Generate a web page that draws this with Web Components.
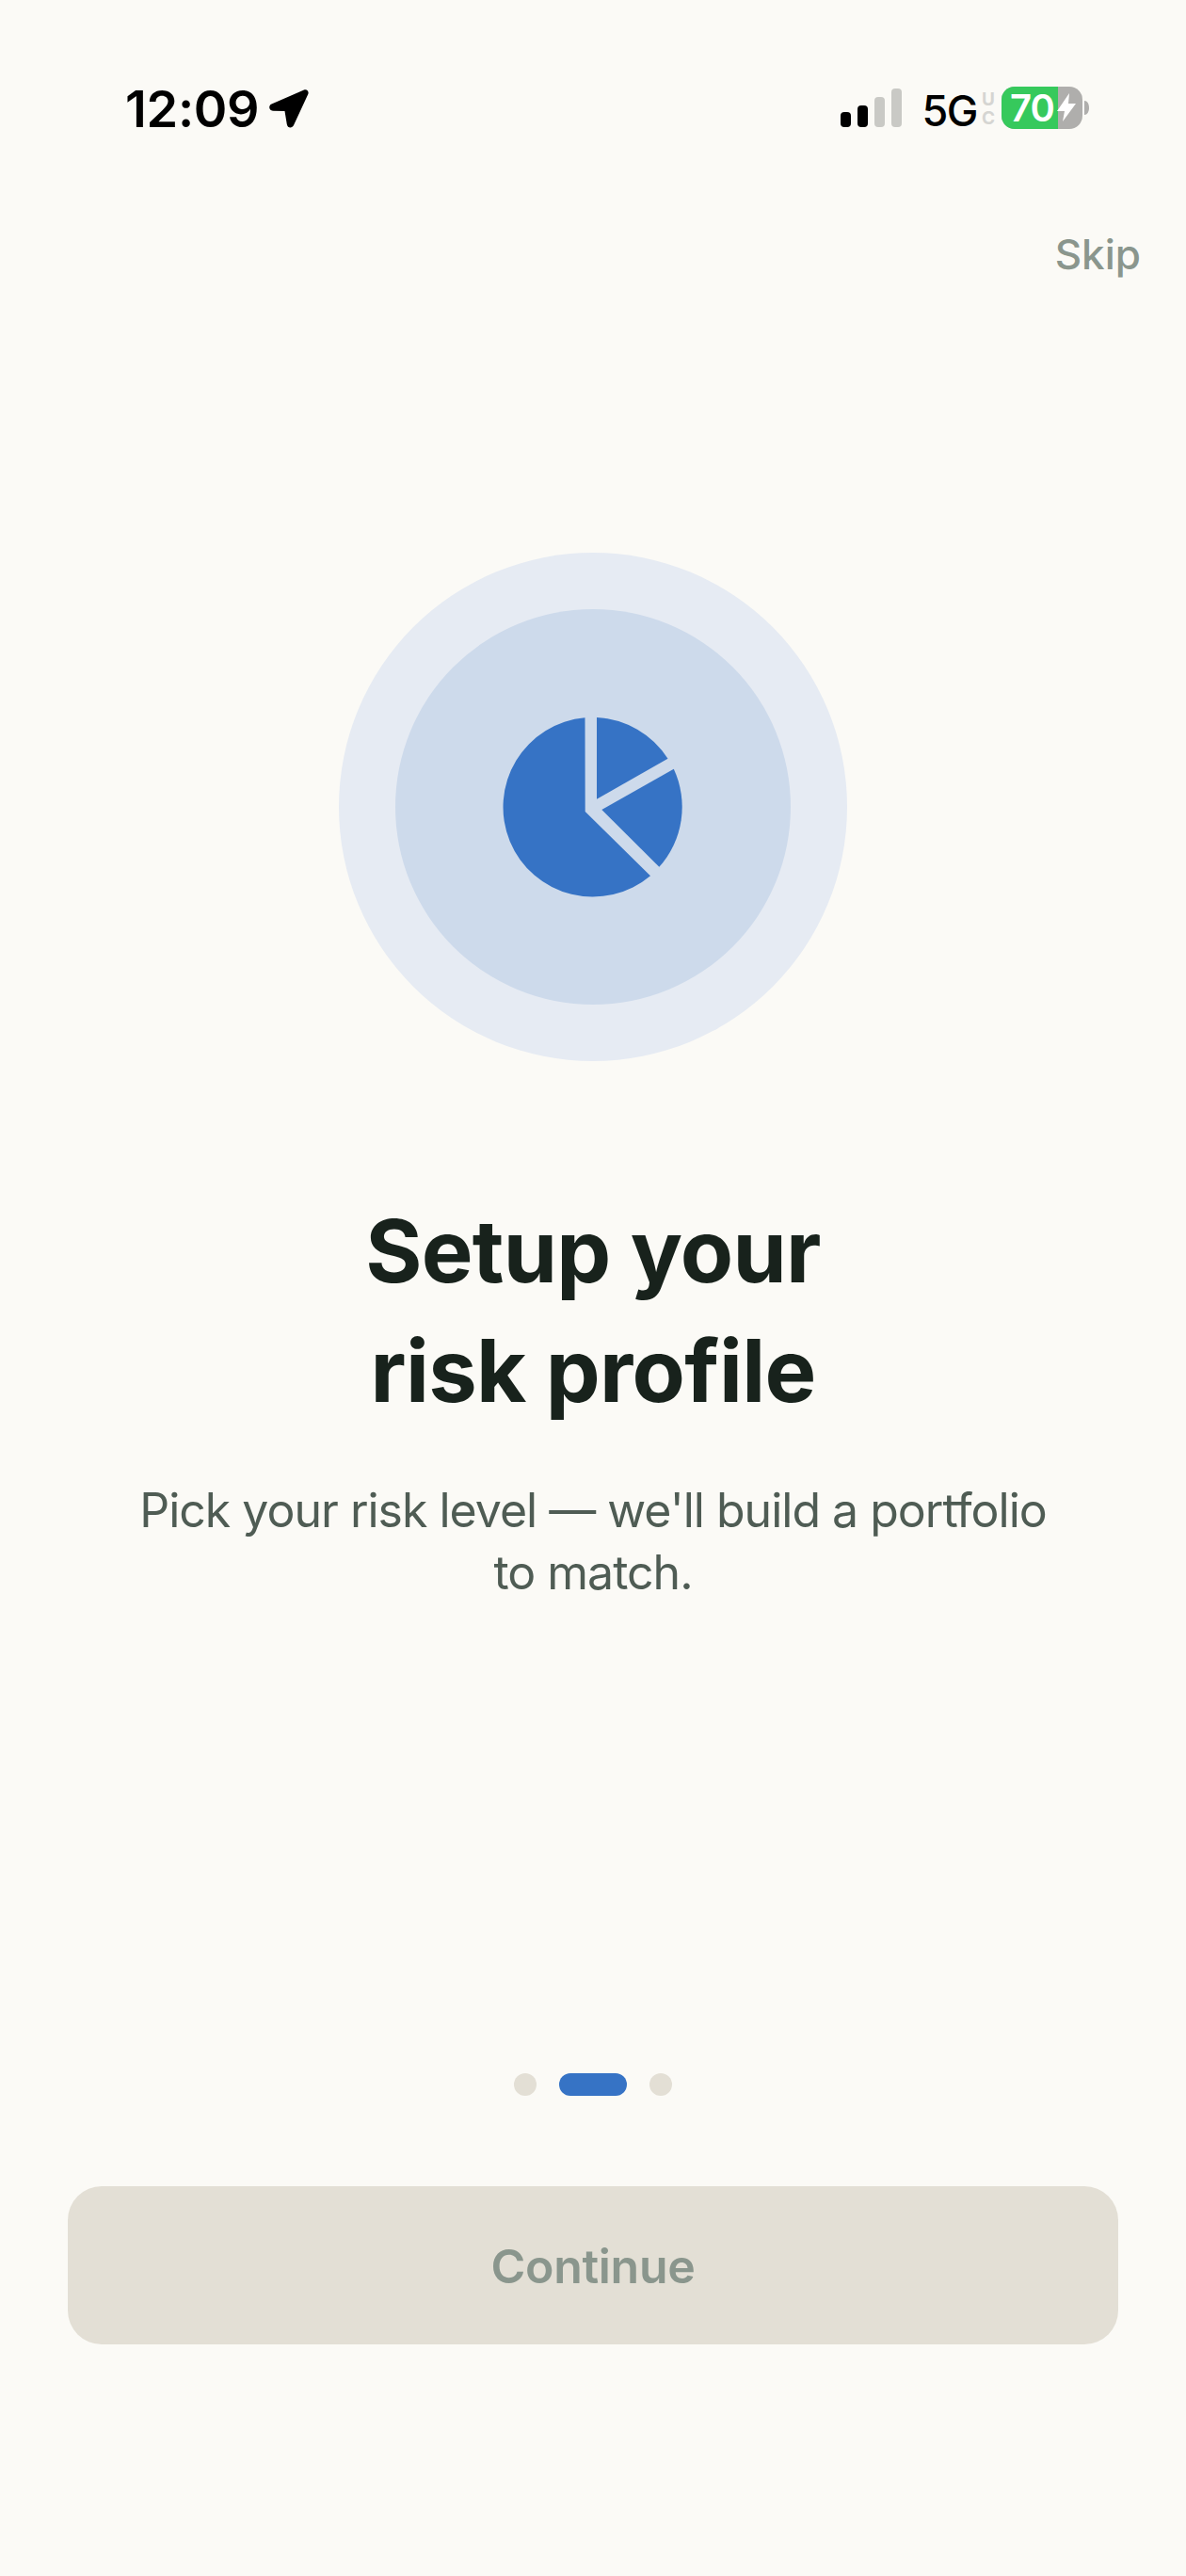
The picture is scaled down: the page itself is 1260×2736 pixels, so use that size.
<!DOCTYPE html>
<html>
<head>
<meta charset="utf-8">
<style>
  html, body { margin: 0; padding: 0; }
  body { background: #fbfaf6; font-family: Inter, "Liberation Sans", sans-serif; }
</style>
</head>
<body>
<onboarding-screen>
  <status-bar></status-bar>
  <skip-link>Skip</skip-link>
  <hero-icon slot="hero"></hero-icon>
  <span slot="title">Setup your<br>risk profile</span>
  <span slot="sub">Pick your risk level — we'll build a portfolio to match.</span>
  <page-dots slot="dots"></page-dots>
  <continue-button slot="cta">Continue</continue-button>
</onboarding-screen>

<script>
///////////////////
// Status bar
class StatusBar extends HTMLElement {
  constructor() {
    super();
    this.attachShadow({mode: 'open'});
    this.shadowRoot.innerHTML = `
      <style>
        :host { display: flex; justify-content: space-between; align-items: center; height: 72px; padding: 80px 0 0 133px; color: #000; font-family: Inter, sans-serif; }
        .left { display: flex; align-items: center; gap: 11px; }
        .time { font-size: 54px; font-weight: 600; line-height: 72px; letter-spacing: -.3px; }
        .right { display: flex; align-items: center; padding-right: 103px; }
        .signal { margin: -3px 22px 0 0; }
        .nw { font-size: 45px; font-weight: 500; line-height: 48px; margin-top: 3px; letter-spacing: -1.5px; }
        .uc { display: flex; flex-direction: column; width: 16px; font-size: 19px; font-weight: 700; line-height: 20px; color: #d5d5d2; text-align: center; margin: 0 6px 0 4px; }
        .batt { display: flex; align-items: center; margin-top: -3px; }
        .cell { display: flex; width: 86px; height: 45px; border-radius: 14px; background: #afaeac; }
        .fill { width: 60px; padding-left: 5px; box-sizing: border-box; border-radius: 14px 0 0 14px; background: #36c95c; color: #fff; font-size: 40px; font-weight: 600; line-height: 45px; text-align: center; letter-spacing: -1px; }
        .bolt { margin-left: -1px; }
        svg { display: block; flex: none; }
      </style>
      <div class="left">
        <span class="time">12:09</span>
        <svg width="42" height="42" viewBox="0 0 42 42"><path d="M2.500 15.500 37 .6C40-.5 42.500 2 41.300 5L26 38C24.500 41.500 19.500 41.500 18.800 37L16.500 23 4 22.700C-.5 22.500-1 17 2.500 15.500z" fill="#000"/></svg>
      </div>
      <div class="right">
        <svg class="signal" width="65" height="41" viewBox="0 0 65 41">
          <rect x="0" y="25" width="11" height="16" rx="4" fill="#000"/>
          <rect x="18" y="18" width="11" height="23" rx="4" fill="#000"/>
          <rect x="36" y="9" width="11" height="32" rx="4" fill="#c9c9c5"/>
          <rect x="54" y="0" width="11" height="41" rx="4" fill="#c9c9c5"/>
        </svg>
        <span class="nw">5G</span>
        <span class="uc"><span>U</span><span>C</span></span>
        <div class="batt">
          <div class="cell">
            <div class="fill">70</div>
            <svg class="bolt" width="20" height="45" viewBox="0 0 20 45"><path d="M13 7 0 26h8L6 37 20 18h-8z" fill="#fff"/></svg>
          </div>
          <svg width="5" height="15" viewBox="0 0 5 15" style="margin-left:2px"><path d="M0 0c3 0 5 3 5 7.500S3 15 0 15z" fill="#afaeac"/></svg>
        </div>
      </div>`;
  }
}
window.customElements.define('status-bar', StatusBar);

///////////////////
// Skip link
class SkipLink extends HTMLElement {
  constructor() {
    super();
    this.attachShadow({mode: 'open'});
    this.shadowRoot.innerHTML = `
      <style>
        :host { display: block; text-align: right; padding: 91px 48px 0 0; font-size: 44px; font-weight: 500; line-height: 54px; color: #8a968d; }
      </style>
      <slot></slot>`;
  }
}
window.customElements.define('skip-link', SkipLink);

///////////////////
// Concentric circles with the pie chart
class HeroIcon extends HTMLElement {
  constructor() {
    super();
    this.attachShadow({mode: 'open'});
    this.shadowRoot.innerHTML = `
      <style>
        :host { display: flex; align-items: center; justify-content: center; width: 540px; height: 540px; border-radius: 50%; background: #e6ebf3; }
        .inner { display: flex; align-items: center; justify-content: center; width: 420px; height: 420px; border-radius: 50%; background: #cddaeb; }
        svg { display: block; }
      </style>
      <div class="inner">
        <svg width="200" height="200" viewBox="530 757 200 200" fill="#3673c5">
          <path d="M621.500 762.300A95.300 95.300 0 1 0 691 930.300L621.700 862z"/>
          <path d="M634 762A95.500 95.500 0 0 1 709.500 805.800L634 848.800z"/>
          <path d="M639.300 860 715.800 816.800A95.500 95.500 0 0 1 700.300 920.800z"/>
        </svg>
      </div>`;
  }
}
window.customElements.define('hero-icon', HeroIcon);

///////////////////
// Page dots
class PageDots extends HTMLElement {
  constructor() {
    super();
    this.attachShadow({mode: 'open'});
    this.shadowRoot.innerHTML = `
      <style>
        :host { display: flex; justify-content: center; gap: 24px; }
        i { display: block; width: 24px; height: 24px; border-radius: 12px; background: #e3dfd5; }
        i.on { width: 72px; background: #3673c5; }
      </style>
      <i></i><i class="on"></i><i></i>`;
  }
}
window.customElements.define('page-dots', PageDots);

///////////////////
// Continue button (disabled look)
class ContinueButton extends HTMLElement {
  constructor() {
    super();
    this.attachShadow({mode: 'open'});
    this.shadowRoot.innerHTML = `
      <style>
        :host { display: flex; align-items: center; justify-content: center; height: 167px; padding-top: 1px; border-radius: 36px; background: #e3dfd5; color: #8a968d; font-size: 50px; font-weight: 600; letter-spacing: -.3px; }
      </style>
      <slot></slot>`;
  }
}
window.customElements.define('continue-button', ContinueButton);

///////////////////
// Whole screen
class OnboardingScreen extends HTMLElement {
  constructor() {
    super();
    this.attachShadow({mode: 'open'});
    this.shadowRoot.innerHTML = `
      <style>
        :host { display: flex; flex-direction: column; height: 2736px; overflow: hidden; font-family: Inter, sans-serif; }
        .hero { display: flex; justify-content: center; padding-top: 290px; }
        .title { margin-top: 138px; text-align: center; font-size: 92px; font-weight: 700; line-height: 127px; letter-spacing: -.7px; color: #18221c; }
        .sub { margin: 52px auto 0; width: 1000px; text-align: center; font-size: 50px; font-weight: 400; line-height: 66px; letter-spacing: -1px; color: #4f5c54; }
        .dots { margin-top: 499px; }
        .cta { margin: 96px 72px 0; }
      </style>
      <div class="top"><slot></slot></div>
      <div class="hero"><slot name="hero"></slot></div>
      <div class="title"><slot name="title"></slot></div>
      <div class="sub"><slot name="sub"></slot></div>
      <div class="dots"><slot name="dots"></slot></div>
      <div class="cta"><slot name="cta"></slot></div>`;
  }
}
window.customElements.define('onboarding-screen', OnboardingScreen);
</script>
</body>
</html>
